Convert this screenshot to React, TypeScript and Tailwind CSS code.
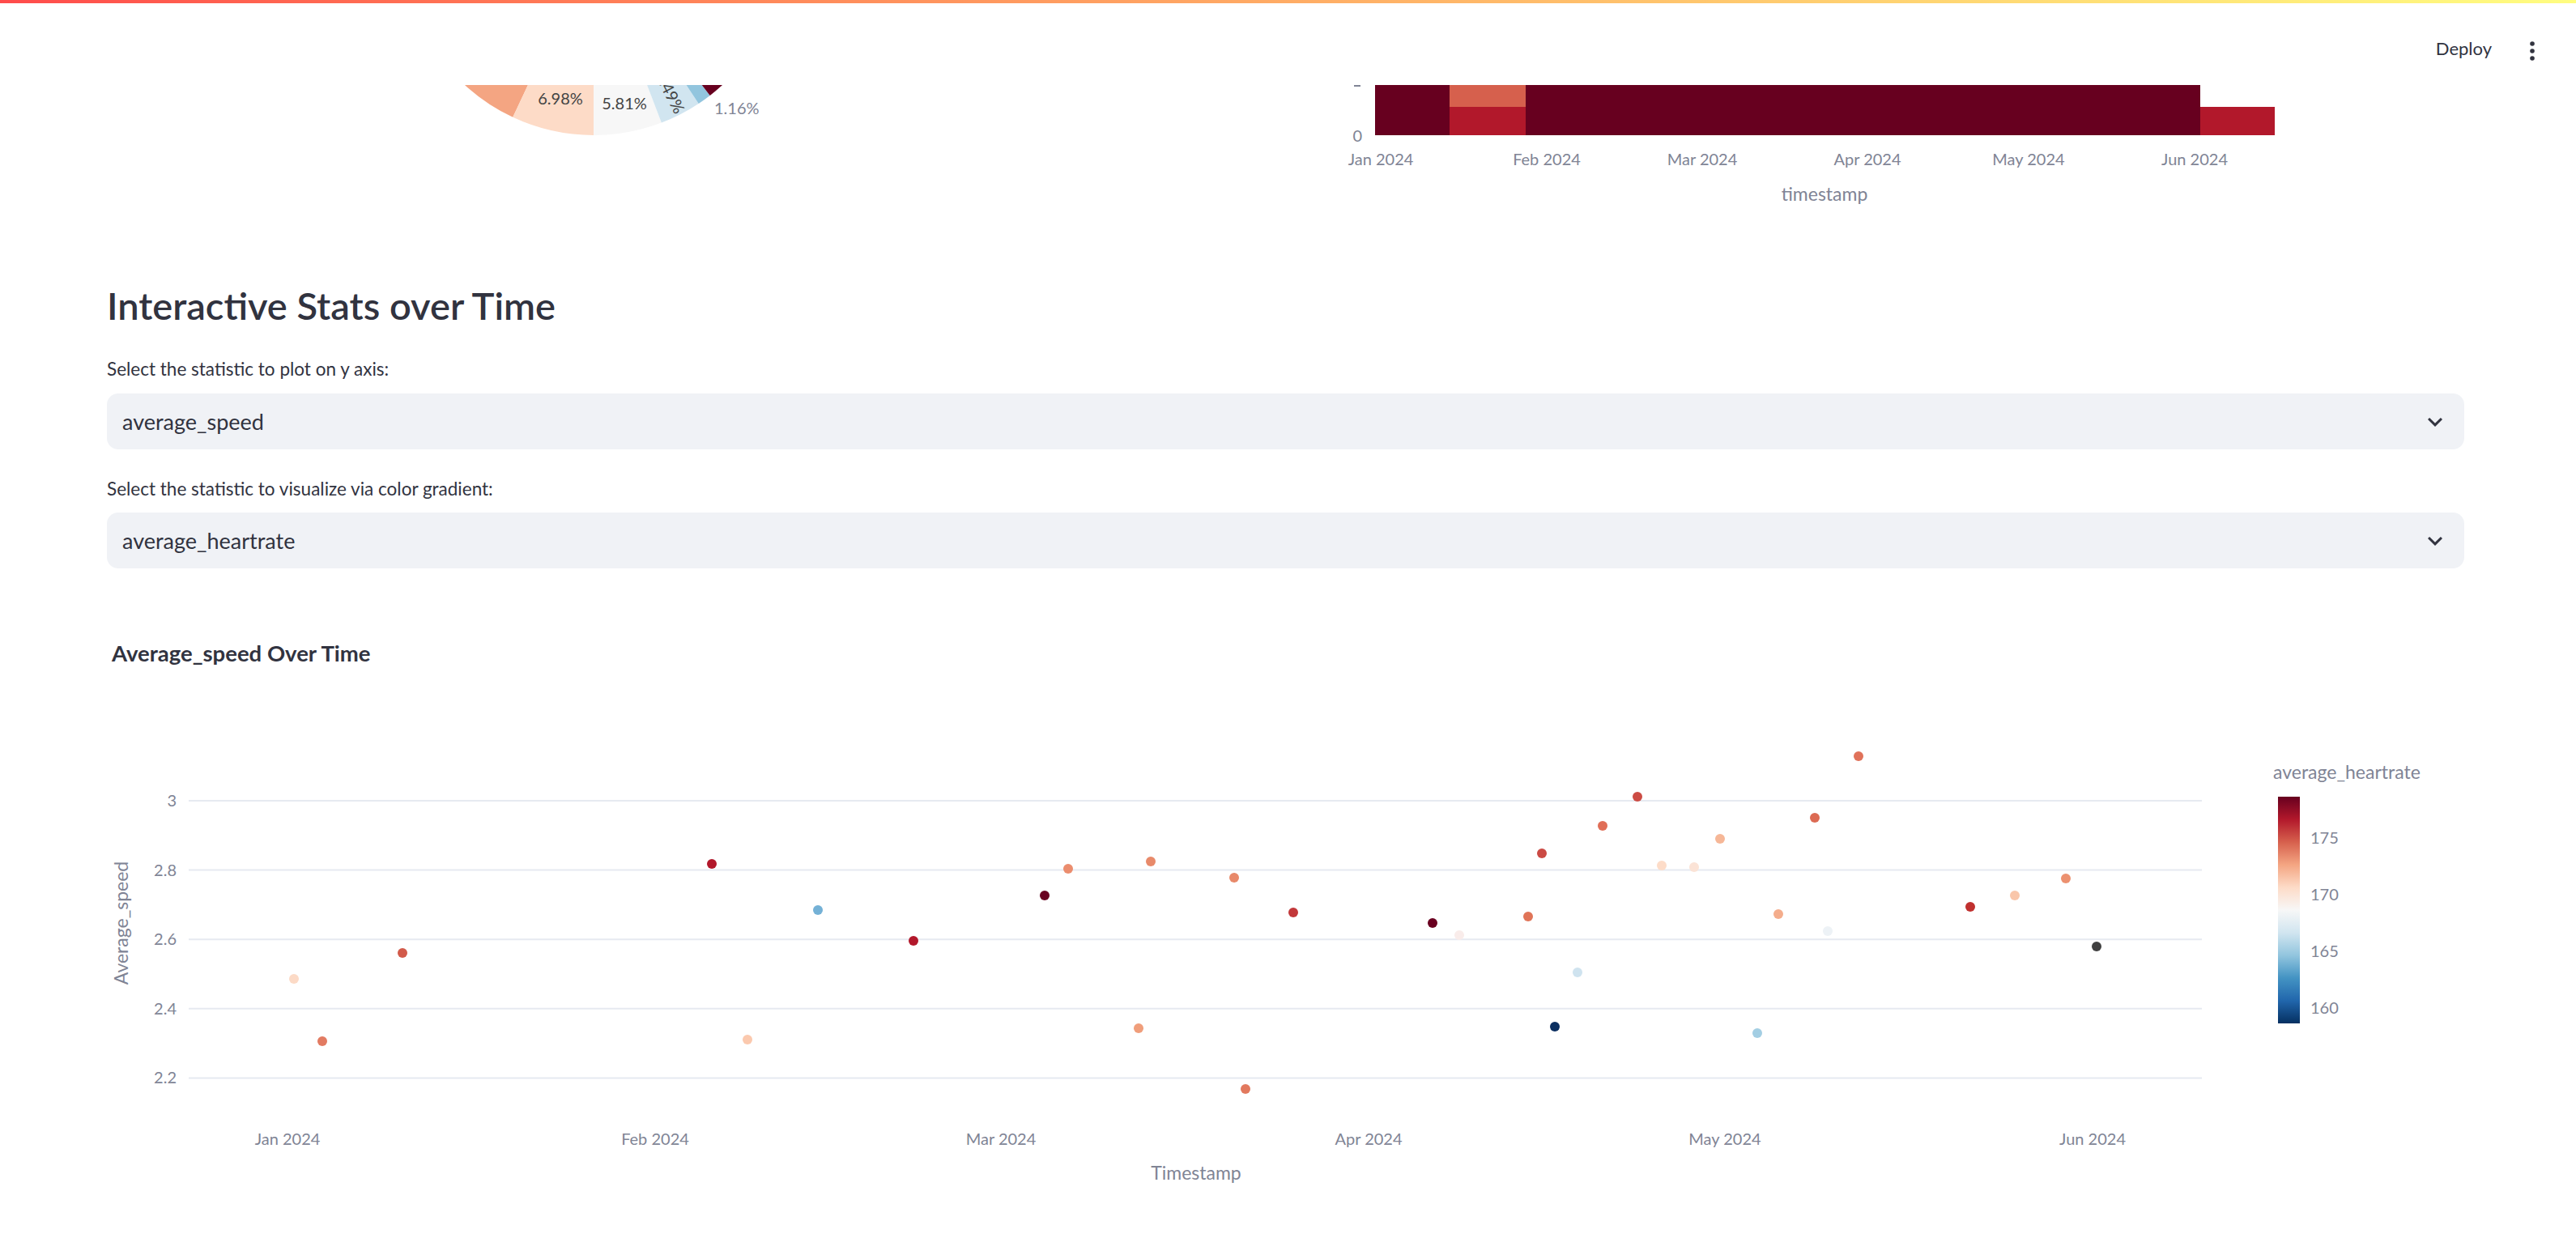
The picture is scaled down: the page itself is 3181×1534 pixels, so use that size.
import React from 'react';

// scatter points: [x, y, colour] in page pixels
const points: [number, number, string][] = [
  [363, 1209, '#fcdac6'],
  [398, 1286, '#e27b62'],
  [497, 1177, '#d25a4a'],
  [879, 1067, '#b2182b'],
  [923, 1284, '#fbc9ae'],
  [1010, 1124, '#74b1d6'],
  [1128, 1162, '#b2182b'],
  [1290, 1106, '#6a0020'],
  [1319, 1073, '#eb8d6e'],
  [1406, 1270, '#f09e7b'],
  [1421, 1064, '#e88a6a'],
  [1524, 1084, '#e8896a'],
  [1538, 1345, '#e2795e'],
  [1597, 1127, '#c2383a'],
  [1769, 1140, '#6a0020'],
  [1802, 1155, '#f9ecea'],
  [1887, 1132, '#e07458'],
  [1904, 1054, '#cb4a44'],
  [1920, 1268, '#0b2f60'],
  [1948, 1201, '#cfe3ef'],
  [1979, 1020, '#e06e57'],
  [2022, 984, '#cc4c44'],
  [2052, 1069, '#fddcc8'],
  [2092, 1071, '#fbe3d6'],
  [2124, 1036, '#f6b797'],
  [2170, 1276, '#a3cee3'],
  [2196, 1129, '#f4ad8c'],
  [2241, 1010, '#dc6a53'],
  [2257, 1150, '#edf2f6'],
  [2295, 934, '#e0725a'],
  [2433, 1120, '#c0302f'],
  [2488, 1106, '#f9c6aa'],
  [2551, 1085, '#ec9170'],
  [2589, 1169, '#404040'],
];

const yTicks = [
  { label: '3', y: 989 },
  { label: '2.8', y: 1074.6 },
  { label: '2.6', y: 1160.2 },
  { label: '2.4', y: 1245.8 },
  { label: '2.2', y: 1331.4 },
];

const xTicks = [
  { label: 'Jan 2024', x: 355 },
  { label: 'Feb 2024', x: 809 },
  { label: 'Mar 2024', x: 1236 },
  { label: 'Apr 2024', x: 1690 },
  { label: 'May 2024', x: 2130 },
  { label: 'Jun 2024', x: 2584 },
];

const heatTicks = [
  { label: 'Jan 2024', x: 1705 },
  { label: 'Feb 2024', x: 1910 },
  { label: 'Mar 2024', x: 2102 },
  { label: 'Apr 2024', x: 2306 },
  { label: 'May 2024', x: 2505 },
  { label: 'Jun 2024', x: 2710 },
];

// pie slices, angles in degrees measured from straight down, growing to the right
const slices = [
  { from: -90, to: -25.1, color: '#f4a582' },
  { from: -25.1, to: 0, color: '#fddbc7' },
  { from: 0, to: 20.9, color: '#f7f7f7' },
  { from: 20.9, to: 33.5, color: '#d1e5f0' },
  { from: 33.5, to: 37.7, color: '#92c5de' },
  { from: 37.7, to: 90, color: '#67001f' },
];

const CX = 733;
const CY = -68;
const R = 235;

const pt = (deg: number, r = R) => {
  const a = (deg * Math.PI) / 180;
  return [CX + r * Math.sin(a), CY + r * Math.cos(a)];
};

const wedge = (from: number, to: number) => {
  const [x0, y0] = pt(from);
  const [x1, y1] = pt(to);
  const large = to - from > 180 ? 1 : 0;
  return `M${CX} ${CY} L${x0} ${y0} A${R} ${R} 0 ${large} 0 ${x1} ${y1} Z`;
};

const PieFragment = () => (
  <svg width={1439} height={185} viewBox="132 105 1439 185" className="block">
    {slices.map((s) => (
      <path key={s.from} d={wedge(s.from, s.to)} fill={s.color} />
    ))}
    <text x={692} y={129} fontSize={20} fill="#444" textAnchor="middle">6.98%</text>
    <text x={771} y={135} fontSize={20} fill="#444" textAnchor="middle">5.81%</text>
    <text x={827} y={121} fontSize={20} fill="#444" textAnchor="middle" transform="rotate(62.8 827 114)">3.49%</text>
    <text x={882} y={141} fontSize={20} fill="#808495">1.16%</text>
  </svg>
);

const HeatmapFragment = () => (
  <svg width={1439} height={185} viewBox="1604 105 1439 185" className="block">
    <rect x={1698} y={105} width={92} height={62} fill="#67001f" />
    <rect x={1790} y={105} width={94} height={27} fill="#d6604d" />
    <rect x={1790} y={132} width={94} height={35} fill="#b2182b" />
    <rect x={1884} y={105} width={833} height={62} fill="#67001f" />
    <rect x={2717} y={132} width={92} height={35} fill="#b2182b" />
    <line x1={1672} y1={106} x2={1680} y2={106} stroke="#808495" strokeWidth={2} />
    <text x={1682} y={175} fontSize={20} fill="#808495" textAnchor="end">0</text>
    {heatTicks.map((t) => (
      <text key={t.label} x={t.x} y={204} fontSize={20} fill="#808495" textAnchor="middle">
        {t.label}
      </text>
    ))}
    <text x={2253} y={248} fontSize={23} fill="#808495" textAnchor="middle">timestamp</text>
  </svg>
);

const ScatterChart = () => (
  <svg width={2911} height={774} viewBox="132 760 2911 774" className="block">
    <defs>
      <linearGradient id="rdbu" x1="0" y1="0" x2="0" y2="1">
        <stop offset="0" stopColor="#67001f" />
        <stop offset="0.1" stopColor="#b2182b" />
        <stop offset="0.2" stopColor="#d6604d" />
        <stop offset="0.3" stopColor="#f4a582" />
        <stop offset="0.4" stopColor="#fddbc7" />
        <stop offset="0.5" stopColor="#f7f7f7" />
        <stop offset="0.6" stopColor="#d1e5f0" />
        <stop offset="0.7" stopColor="#92c5de" />
        <stop offset="0.8" stopColor="#4393c3" />
        <stop offset="0.9" stopColor="#2166ac" />
        <stop offset="1" stopColor="#053061" />
      </linearGradient>
    </defs>

    <text x={138} y={817} fontSize={27.5} fontWeight={700} fill="#31333f">Average_speed Over Time</text>

    {yTicks.map((t) => (
      <g key={t.label}>
        <line x1={233} y1={t.y} x2={2719} y2={t.y} stroke="#e6eaf1" strokeWidth={2} />
        <text x={218} y={t.y + 7} fontSize={20} fill="#808495" textAnchor="end">{t.label}</text>
      </g>
    ))}

    <text x={149} y={1140} fontSize={23} fill="#808495" textAnchor="middle" dominantBaseline="central" transform="rotate(-90 149 1140)">
      Average_speed
    </text>

    {xTicks.map((t) => (
      <text key={t.label} x={t.x} y={1414} fontSize={20} fill="#808495" textAnchor="middle">{t.label}</text>
    ))}
    <text x={1477} y={1457} fontSize={23} fill="#808495" textAnchor="middle">Timestamp</text>

    {points.map(([x, y, c], i) => (
      <circle key={i} cx={x} cy={y} r={6} fill={c} />
    ))}

    {/* colour bar */}
    <text x={2807} y={962} fontSize={23} fill="#808495">average_heartrate</text>
    <rect x={2813} y={984} width={27} height={280} fill="url(#rdbu)" />
    {[['175', 1035], ['170', 1105], ['165', 1175], ['160', 1245]].map(([l, y]) => (
      <text key={l} x={2853} y={Number(y) + 7} fontSize={20} fill="#808495">{l}</text>
    ))}
  </svg>
);

const Chevron = () => (
  <svg width={36} height={36} viewBox="0 0 24 24" fill="#31333f">
    <path d="M7.41 8.59 12 13.17l4.59-4.58L18 10l-6 6-6-6 1.41-1.41z" />
  </svg>
);

const SelectBox = ({ value }: { value: string }) => (
  <div className="h-[69px] rounded-[14px] bg-[#f0f2f6] pl-[19px] pr-[18px] flex items-center justify-between">
    <span className="text-[27px] leading-[36px] text-[#31333f]">{value}</span>
    <Chevron />
  </div>
);

export default function App() {
  return (
    <div className="min-h-screen w-full bg-white font-[Lato,sans-serif] text-[#31333f] overflow-hidden">
      <div className="h-[4px] w-full bg-linear-to-r from-[#ff4b4b] to-[#fffd80]" />

      <header className="h-[101px] flex items-start justify-end pt-[40px] pr-[48px]">
        <span className="text-[22px] leading-[32px] mr-[44px]">Deploy</span>
        <svg width={12} height={24} viewBox="0 0 12 24" className="mt-[7px]" fill="#31333f">
          <circle cx={6} cy={3} r={2.8} />
          <circle cx={6} cy={12} r={2.8} />
          <circle cx={6} cy={21} r={2.8} />
        </svg>
      </header>

      <main className="ml-[132px] w-[2911px]">
        <div className="flex gap-[33px]">
          <PieFragment />
          <HeatmapFragment />
        </div>

        <h3 className="mt-[57px] text-[47px] leading-[60px] font-semibold">Interactive Stats over Time</h3>

        <p className="mt-[33px] text-[22.5px] leading-[32px]">Select the statistic to plot on y axis:</p>
        <div className="mt-[14px]">
          <SelectBox value="average_speed" />
        </div>

        <p className="mt-[33px] text-[22.5px] leading-[32px]">Select the statistic to visualize via color gradient:</p>
        <div className="mt-[13px]">
          <SelectBox value="average_heartrate" />
        </div>

        <div className="mt-[58px]">
          <ScatterChart />
        </div>
      </main>
    </div>
  );
}
